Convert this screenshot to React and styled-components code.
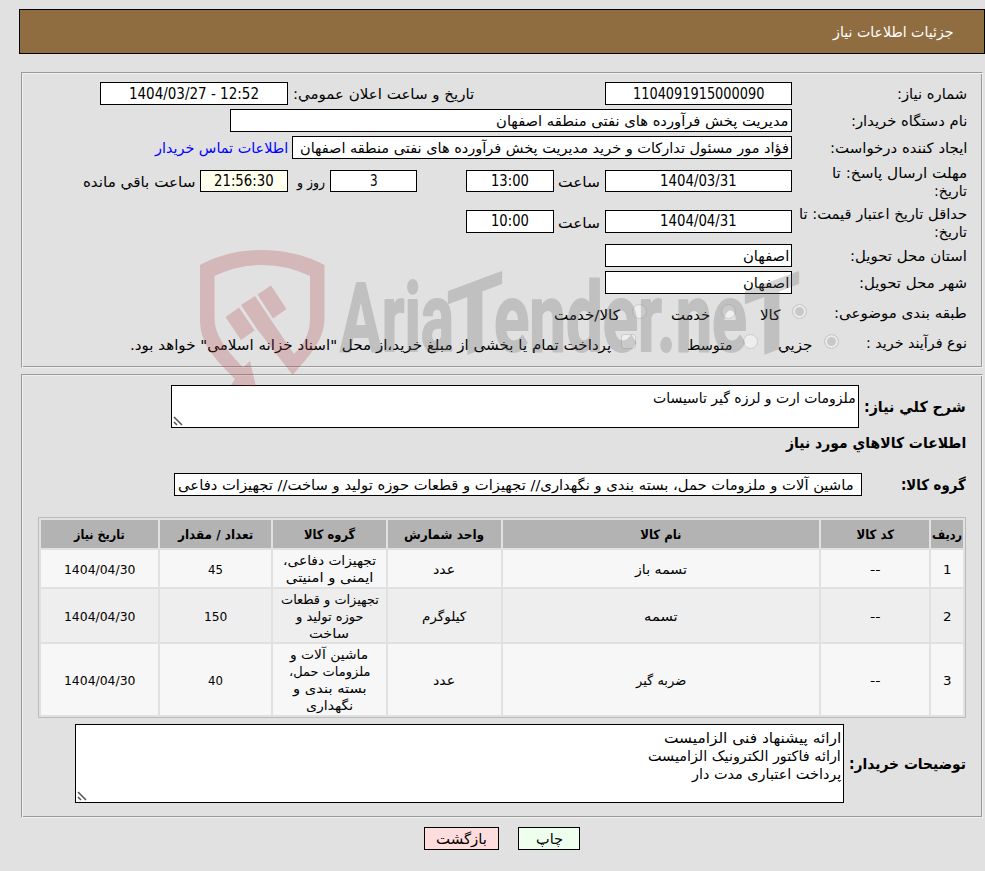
import React, { useLayoutEffect, useRef, useState } from 'react';
import styled, { createGlobalStyle } from 'styled-components';

const GlobalStyle = createGlobalStyle`
  body {
    margin: 0;
    background: #e1e1e1;
    color: #000;
    font: 14.3px/18px 'DejaVu Sans Condensed', 'DejaVu Sans', sans-serif;
  }
`;

const Page = styled.div`
  position: relative;
  box-sizing: border-box;
  width: 985px;
  height: 871px;
  padding-top: 9px;
  overflow: hidden;
`;

const Header = styled.header`
  display: flex;
  align-items: center;
  box-sizing: border-box;
  height: 45px;
  margin-left: 19px;
  padding-right: 31px;
  border: 1px solid #000;
  background: #8f6d40;
  color: #fff;
`;

const Panel = styled.section`
  box-sizing: border-box;
  width: 962px;
  height: ${props => props.$height}px;
  margin: ${props => props.$top}px 2px 0 0;
  padding: 1px 15px 0 0;
  border: 1px solid;
  border-color: #9a9a9a #f0f0f0 #f0f0f0 #9a9a9a;
  box-shadow: inset 1px 1px #f0f0f0, inset -1px -1px #9a9a9a;
`;

const Row = styled.div`
  display: flex;
  align-items: center;
  height: ${props => props.$height || 23}px;
  padding-top: ${props => props.$top || 4}px;
`;

const Label = styled.div`
  flex: none;
  width: ${props => props.$width || 175}px;
`;

const Gap = styled.i`
  flex: none;
  width: ${props => props.$size}px;
`;

const Field = styled.div`
  display: flex;
  flex: none;
  align-items: center;
  justify-content: ${props => (props.$start ? 'flex-start' : 'center')};
  box-sizing: border-box;
  width: ${props => props.$width}px;
  height: ${props => props.$height || 23}px;
  margin-bottom: ${props => props.$lift || 0}px;
  padding: 0 ${props => (props.$start ? props.$pad || 2 : 0)}px;
  border: 1px solid #000;
  background: ${props => props.$color || '#fff'};
  font-size: ${props => (props.$start ? 14.3 : 15)}px;
  overflow: hidden;
`;

const Area = styled.div`
  position: relative;
  flex: none;
  box-sizing: border-box;
  width: ${props => props.$width}px;
  height: ${props => props.$height}px;
  padding: ${props => props.$pad || 4}px 2px;
  border: 1px solid #000;
  background: #fff;
`;

const Grip = styled.svg`
  position: absolute;
  left: 1px;
  bottom: 1px;
`;

const Radio = styled.i`
  flex: none;
  box-sizing: border-box;
  width: 15px;
  height: 15px;
  margin-top: ${props => props.$shift || 0}px;
  border: 1px solid #cbcbcb;
  border-radius: ${props => (props.$square ? 3 : 8)}px;
  background: ${props => (props.$checked ? '#c8c8c8' : '#eee')};
  box-shadow: ${props => (props.$checked ? 'inset 0 0 0 2px #ececec' : 'none')};
`;

const Below = styled.span`
  flex: none;
  padding-top: 4px;
`;

const Grid = styled.div`
  display: grid;
  grid-template-columns: 32px 108px 316px 113px 113px 111px 117px;
  grid-template-rows: 28px 37px 53px 71px;
  gap: 2px;
  box-sizing: border-box;
  width: 928px;
  margin: 21px 1px 0 0;
  padding: 2px;
  border: 1px solid #bbb;
  font-size: 13px;
  line-height: 17px;
`;

const Cell = styled.div`
  display: flex;
  flex-direction: column;
  align-items: center;
  justify-content: center;
  padding-top: 1px;
  background: ${props => (props.$even ? '#eee' : '#f7f7f7')};
`;

const HeadCell = styled(Cell)`
  padding-top: 0;
  background: #b3b3b3;
  font-weight: bold;
`;

const Strong = styled.div`
  flex: none;
  width: ${props => props.$width}px;
  padding-right: 1px;
  box-sizing: border-box;
  font-size: 15px;
  font-weight: bold;
`;

const Link = styled.a`
  color: #00f;
`;

const Actions = styled.div`
  display: flex;
  gap: 19px;
  margin: 9px 405px 0 0;
`;

const Button = styled.button`
  display: flex;
  align-items: center;
  justify-content: center;
  width: ${props => props.$width}px;
  height: 23px;
  padding: 0;
  border: 1px solid #000;
  background: ${props => props.$color};
  color: #000;
  font: inherit;
`;

const Watermark = styled.svg`
  position: absolute;
  top: 245px;
  left: 195px;
  pointer-events: none;
`;

const FitBox = styled.span`
  display: block;
  flex: none;
  text-align: right;
  white-space: pre;
`;

const FitText = styled.span`
  display: inline-block;
  transform-origin: right center;
`;

// Keeps a run of text at a fixed width, whatever font is picked up.
function Fit({ w, children }) {
  const ref = useRef(null);
  const [scale, setScale] = useState(1);

  useLayoutEffect(() => {
    setScale(w / ref.current.offsetWidth);
  }, [w, children]);

  return (
    <FitBox style={{ width: w }}>
      <FitText ref={ref} style={{ transform: `scaleX(${scale})` }}>
        {children}
      </FitText>
    </FitBox>
  );
}

function ResizeGrip() {
  return (
    <Grip width="10" height="10" viewBox="0 0 10 10" stroke="#555" strokeWidth="1.6">
      <path d="M1 1l8 8M1 6l3 3" />
    </Grip>
  );
}

const columns = [
  ['ردیف', 30],
  ['کد کالا', 38],
  ['نام کالا', 41],
  ['واحد شمارش', 80],
  ['گروه کالا', 51],
  ['تعداد / مقدار', 75],
  ['تاریخ نیاز', 51],
];

const items = [
  [
    [['1', 8]],
    [['--', 10]],
    [['تسمه باز', 52]],
    [['عدد', 22]],
    [['تجهیزات دفاعی،', 93], ['ایمنی و امنیتی', 87]],
    [['45', 15]],
    [['1404/04/30', 71]],
  ],
  [
    [['2', 8]],
    [['--', 10]],
    [['تسمه', 34]],
    [['کیلوگرم', 44]],
    [['تجهیزات و قطعات', 98], ['حوزه تولید و', 68], ['ساخت', 40]],
    [['150', 23]],
    [['1404/04/30', 71]],
  ],
  [
    [['3', 8]],
    [['--', 10]],
    [['ضربه گیر', 50]],
    [['عدد', 22]],
    [['ماشین آلات و', 78], ['ملزومات حمل،', 81], ['بسته بندی و', 74], ['نگهداری', 47]],
    [['40', 15]],
    [['1404/04/30', 71]],
  ],
];

function NeedInfo() {
  return (
    <Panel $top={18} $height={296}>
      <Row $top={8}>
        <Label><Fit w={70}>شماره نیاز:</Fit></Label>
        <Field $width={187}><Fit w={131}>1104091915000090</Fit></Field>
        <Gap $size={131} />
        <Fit w={181}>تاریخ و ساعت اعلان عمومي:</Fit>
        <Gap $size={5} />
        <Field $width={188}><Fit w={130}><bdo dir="ltr">1404/03/27 - 12:52</bdo></Fit></Field>
      </Row>
      <Row>
        <Label><Fit w={116}>نام دستگاه خریدار:</Fit></Label>
        <Field $width={562} $start><Fit w={293}>مدیریت پخش فرآورده های نفتی منطقه اصفهان</Fit></Field>
      </Row>
      <Row>
        <Label><Fit w={138}>ایجاد کننده درخواست:</Fit></Label>
        <Field $width={500} $start>
          <Fit w={489}>فؤاد مور مسئول تدارکات و خرید مدیریت پخش فرآورده های نفتی منطقه اصفهان</Fit>
        </Field>
        <Gap $size={4} />
        <Link><Fit w={133}>اطلاعات تماس خریدار</Fit></Link>
      </Row>
      <Row $top={5} $height={35}>
        <Label>
          <Fit w={135}>مهلت ارسال پاسخ: تا</Fit>
          <Fit w={33}>تاریخ:</Fit>
        </Label>
        <Field $width={187} $height={22} $lift={2}><Fit w={77}>1404/03/31</Fit></Field>
        <Gap $size={5} />
        <Fit w={42}>ساعت</Fit>
        <Gap $size={4} />
        <Field $width={88} $height={22} $lift={2}><Fit w={38}>13:00</Fit></Field>
        <Gap $size={49} />
        <Field $width={87} $height={22} $lift={2}><Fit w={8}>3</Fit></Field>
        <Gap $size={5} />
        <Fit w={28}>روز و</Fit>
        <Gap $size={9} />
        <Field $width={88} $height={22} $lift={2} $color="#ffffee"><Fit w={60}>21:56:30</Fit></Field>
        <Gap $size={5} />
        <Fit w={112}>ساعت باقي مانده</Fit>
      </Row>
      <Row $top={7} $height={34}>
        <Label>
          <Fit w={168}>حداقل تاریخ اعتبار قیمت: تا</Fit>
          <Fit w={33}>تاریخ:</Fit>
        </Label>
        <Field $width={187} $lift={4}><Fit w={77}>1404/04/31</Fit></Field>
        <Gap $size={5} />
        <Fit w={42}>ساعت</Fit>
        <Gap $size={4} />
        <Field $width={88} $lift={4}><Fit w={38}>10:00</Fit></Field>
      </Row>
      <Row $top={4}>
        <Label><Fit w={117}>استان محل تحویل:</Fit></Label>
        <Field $width={187} $start><Fit w={46}>اصفهان</Fit></Field>
      </Row>
      <Row>
        <Label><Fit w={108}>شهر محل تحویل:</Fit></Label>
        <Field $width={187} $start><Fit w={46}>اصفهان</Fit></Field>
      </Row>
      <Row $top={6} $height={26}>
        <Label $width={160}><Fit w={133}>طبقه بندی موضوعی:</Fit></Label>
        <Radio $checked $shift={-3} />
        <Gap $size={12} />
        <Below><Fit w={20}>کالا</Fit></Below>
        <Gap $size={24} />
        <Radio $shift={-3} />
        <Gap $size={11} />
        <Below><Fit w={39}>خدمت</Fit></Below>
        <Gap $size={24} />
        <Radio $shift={-3} />
        <Gap $size={12} />
        <Below><Fit w={66}>کالا/خدمت</Fit></Below>
      </Row>
      <Row $top={4} $height={26}>
        <Label $width={128}><Fit w={101}>نوع فرآیند خرید :</Fit></Label>
        <Radio $checked $shift={-3} />
        <Gap $size={12} />
        <Below><Fit w={34}>جزيي</Fit></Below>
        <Gap $size={20} />
        <Radio $shift={-3} />
        <Gap $size={11} />
        <Below><Fit w={45}>متوسط</Fit></Below>
        <Gap $size={51} />
        <Radio $square $shift={-3} />
        <Gap $size={10} />
        <Below><Fit w={481}>پرداخت تمام یا بخشی از مبلغ خرید،از محل "اسناد خزانه اسلامی" خواهد بود.</Fit></Below>
      </Row>
    </Panel>
  );
}

function Goods() {
  return (
    <Panel $top={6} $height={444}>
      <Row $top={9} $height={43}>
        <Strong $width={108}><Fit w={102}>شرح کلي نیاز:</Fit></Strong>
        <Area $width={688} $height={43} $pad={3}>
          <Fit w={203}>ملزومات ارت و لرزه گیر تاسیسات</Fit>
          <ResizeGrip />
        </Area>
      </Row>
      <Row $top={6} $height={18}>
        <Strong><Fit w={180}>اطلاعات کالاهاي مورد نیاز</Fit></Strong>
      </Row>
      <Row $top={21}>
        <Strong $width={105}><Fit w={65}>گروه کالا:</Fit></Strong>
        <Field $width={688} $start $pad={7}>
          <Fit w={676}>ماشین آلات و ملزومات حمل، بسته بندی و نگهداری// تجهیزات و قطعات حوزه تولید و ساخت// تجهیزات دفاعی</Fit>
        </Field>
      </Row>
      <Grid>
        {columns.map(([title, w]) => (
          <HeadCell key={title}><Fit w={w}>{title}</Fit></HeadCell>
        ))}
        {items.map((item, row) =>
          item.map((lines, col) => (
            <Cell key={`${row}-${col}`} $even={row % 2 === 1}>
              {lines.map(([text, w]) => <Fit key={text} w={w}>{text}</Fit>)}
            </Cell>
          ))
        )}
      </Grid>
      <Row $top={6} $height={79}>
        <Strong $width={123}><Fit w={117}>توضیحات خریدار:</Fit></Strong>
        <Area $width={769} $height={79}>
          <Fit w={177}>ارائه پیشنهاد فنی الزامیست</Fit>
          <Fit w={193}>ارائه فاکتور الکترونیک الزامیست</Fit>
          <Fit w={149}>پرداخت اعتباری مدت دار</Fit>
          <ResizeGrip />
        </Area>
      </Row>
    </Panel>
  );
}

function Logo() {
  return (
    <Watermark width="610" height="145" viewBox="195 245 610 145" direction="ltr">
      <g fill="#b13d41" opacity="0.25">
        <path d="M200 265Q228 250 262 250T324.500 265V318C324.500 340 309 356 292.700 375L257 329L241 305L255 296L271 320L294 354C304 344 310 334 310 318V276Q287 265 262 265T214.500 276V318C215 338 229 352 243 367.500L250 361L256 386.500L231 385L235 379C217 361 200 345 200 320Z" />
        <path d="M225.500 317L239 307.500L254.500 330.500L241 340ZM257.500 294.500L271 285.500L286.500 309L273 318.500Z" />
      </g>
      <g
        fill="#616161"
        stroke="#616161"
        strokeWidth="2"
        strokeLinejoin="round"
        opacity="0.25"
        fontFamily="Roboto"
        fontWeight="700"
        fontSize="97"
      >
        <text x="340" y="351" textLength="114" lengthAdjust="spacingAndGlyphs">Aria</text>
        <text x="-28" transform="translate(475 351) skewY(-20.5)" textLength="56" lengthAdjust="spacingAndGlyphs">T</text>
        <text x="494" y="351" textLength="168" lengthAdjust="spacingAndGlyphs">ender</text>
        <text x="657" y="351" textLength="90" lengthAdjust="spacingAndGlyphs">.ne</text>
        <text x="-28" transform="translate(772 351) skewY(-20.5)" textLength="56" lengthAdjust="spacingAndGlyphs">T</text>
      </g>
    </Watermark>
  );
}

function App() {
  return (
    <Page dir="rtl">
      <GlobalStyle />
      <Header><Fit w={121}>جزئیات اطلاعات نیاز</Fit></Header>
      <NeedInfo />
      <Goods />
      <Actions>
        <Button $width={62} $color="#eeffee"><Fit w={27}>چاپ</Fit></Button>
        <Button $width={75} $color="#ffdddd"><Fit w={51}>بازگشت</Fit></Button>
      </Actions>
      <Logo />
    </Page>
  );
}

export default App;
